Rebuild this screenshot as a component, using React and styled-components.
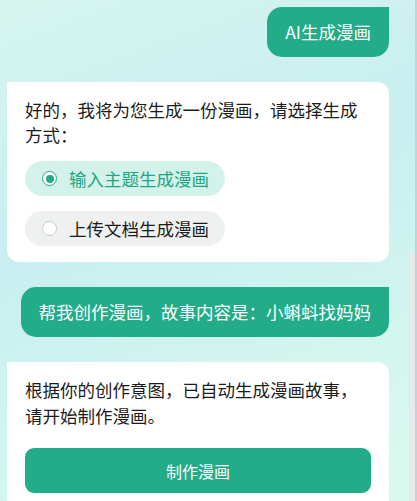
import React from "react";
import styled, { createGlobalStyle } from "styled-components";

const Global = createGlobalStyle`
  html, body { margin: 0; padding: 0; height: 100%; overflow: hidden; }
  body {
    font-family: "Noto Sans CJK SC", "Noto Sans", sans-serif;
    background: linear-gradient(160deg, #d6f5ef 0%, #c9eef0 40%, #d3f6ee 75%, #daf8f0 100%);
    color: #1c1c1c;
  }
`;

const Page = styled.div`
  display: flex;
  flex-direction: column;
  gap: 25px;
  padding: 7px 28px 0 7px;
  height: 501px;
  box-sizing: border-box;
`;

const UserRow = styled.div`
  display: flex;
  justify-content: flex-end;
`;

const UserBubble = styled.div`
  background: #22ac87;
  color: #fff;
  font-size: 17.5px;
  line-height: 26px;
  padding: 12px 18px;
  border-radius: 15px 0 15px 15px;
  white-space: nowrap;
`;

const BotCard = styled.div`
  background: #fff;
  border-radius: 0 12px 12px 12px;
  padding: 15px 18px 16px 18px;
  display: flex;
  flex-direction: column;
`;

const CardText = styled.div`
  font-size: 17.5px;
  line-height: ${(p) => p.$lh || 25}px;
  color: #1c1c1c;
`;

const Options = styled.div`
  display: flex;
  flex-direction: column;
  align-items: flex-start;
  gap: 15px;
  margin-top: 14px;
`;

const Option = styled.div`
  display: flex;
  align-items: center;
  gap: 12px;
  height: 35px;
  padding: 0 16px 0 17px;
  border-radius: 18px;
  background: ${(p) => (p.$active ? "#d3f3ea" : "#eff1f1")};
  color: ${(p) => (p.$active ? "#1fa584" : "#1c1c1c")};
  font-size: 17.5px;
`;

const Radio = styled.span`
  width: 15px;
  height: 15px;
  box-sizing: border-box;
  border-radius: 50%;
  border: 1.5px solid ${(p) => (p.$active ? "#22ac87" : "#c9cccc")};
  background: #fff;
  display: flex;
  align-items: center;
  justify-content: center;
  &::after {
    content: "";
    width: 8px;
    height: 8px;
    border-radius: 50%;
    background: ${(p) => (p.$active ? "#22ac87" : "transparent")};
  }
`;

const ActionButton = styled.button`
  margin-top: 19px;
  height: 45px;
  border: none;
  border-radius: 9px;
  background: #22ac87;
  color: #fff;
  font-family: inherit;
  font-size: 16px;
  cursor: pointer;
`;

const ScrollLine = styled.div`
  position: fixed;
  top: 0;
  right: 0;
  bottom: 0;
  width: 2px;
  background: #c3d2d5;
`;

const ScrollThumb = styled.div`
  position: fixed;
  top: 253px;
  right: 2px;
  bottom: 0;
  width: 6px;
  background: #e8eaea;
  border-radius: 3px 3px 0 0;
`;

export default function App() {
  return (
    <>
      <Global />
      <Page>
        <UserRow>
          <UserBubble>AI生成漫画</UserBubble>
        </UserRow>
        <BotCard>
          <CardText>好的，我将为您生成一份漫画，请选择生成方式：</CardText>
          <Options>
            <Option $active>
              <Radio $active />
              输入主题生成漫画
            </Option>
            <Option>
              <Radio />
              上传文档生成漫画
            </Option>
          </Options>
        </BotCard>
        <UserRow>
          <UserBubble>帮我创作漫画，故事内容是：小蝌蚪找妈妈</UserBubble>
        </UserRow>
        <BotCard>
          <CardText $lh={26}>根据你的创作意图，已自动生成漫画故事，请开始制作漫画。</CardText>
          <ActionButton>制作漫画</ActionButton>
        </BotCard>
      </Page>
      <ScrollThumb />
      <ScrollLine />
    </>
  );
}
